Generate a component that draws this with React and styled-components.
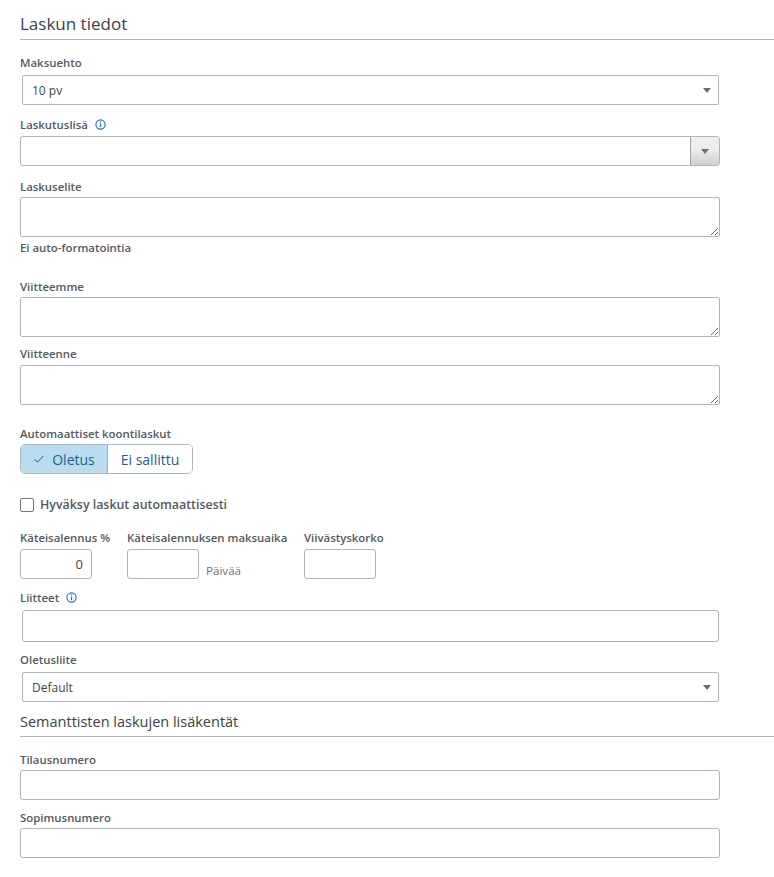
import React from "react";
import styled, { createGlobalStyle } from "styled-components";

const GlobalStyle = createGlobalStyle`
  html, body {
    margin: 0;
    padding: 0;
    background: #fff;
    font-family: "Open Sans", "Liberation Sans", sans-serif;
  }
  * { box-sizing: border-box; }
`;

const Page = styled.div`
  width: 774px;
  height: 877px;
  overflow: hidden;
  padding: 13px 0 0 20px;
`;

const Heading = styled.h2`
  margin: ${(p) => p.$top || 0}px 0 0;
  height: ${(p) => p.$height}px;
  border-bottom: 1px solid #aab4ba;
  color: #3a4247;
  font-size: ${(p) => p.$size}px;
  font-weight: 400;
  line-height: 22px;
`;

const Field = styled.div`
  width: 700px;
  margin-top: ${(p) => p.$top || 0}px;
`;

const Label = styled.label`
  display: flex;
  align-items: center;
  gap: 7px;
  height: 14px;
  margin-bottom: ${(p) => p.$gap ?? 5}px;
  color: #52595f;
  font-size: 11.4px;
  font-weight: 600;
  line-height: 14px;
  white-space: nowrap;
`;

const SelectBox = styled.div`
  display: flex;
  align-items: center;
  justify-content: space-between;
  width: 697px;
  height: 30px;
  margin-left: 2px;
  padding: 0 7px 0 9px;
  border: 1px solid #aeb7bb;
  border-radius: 2px;
  color: #3f474c;
  font-size: 12px;
`;

const Arrow = styled.span`
  width: 0;
  height: 0;
  border-left: 4px solid transparent;
  border-right: 4px solid transparent;
  border-top: 5px solid #6f6f6f;
`;

const Combo = styled.div`
  display: flex;
  height: 30px;
  border: 1px solid #aeb7bb;
  border-radius: 3px;
  overflow: hidden;
`;

const ComboInput = styled.div`
  flex: 1;
`;

const ComboButton = styled.div`
  display: flex;
  align-items: center;
  justify-content: center;
  width: 29px;
  border-left: 1px solid #9da3a6;
  background: linear-gradient(180deg, #f0f0f0 0%, #ececec 45%, #cfcfcf 100%);
`;

const TextInput = styled.div`
  width: ${(p) => p.$width || 700}px;
  height: ${(p) => p.$height || 30}px;
  margin-left: ${(p) => p.$left || 0}px;
  padding: 0 8px;
  border: 1px solid #aeb7bb;
  border-radius: 3px;
  color: #3f474c;
  font-size: 13px;
  line-height: 28px;
  text-align: right;
`;

const TextArea = styled.textarea`
  display: block;
  width: 700px;
  height: 40px;
  border: 1px solid #aeb7bb;
  border-radius: 2px;
  outline: none;
  background: #fff;
`;

const Hint = styled.div`
  height: 14px;
  margin-top: 4px;
  color: #52595f;
  font-size: 11.4px;
  font-weight: 600;
  line-height: 14px;
`;

const ButtonGroup = styled.div`
  display: flex;
  width: 173px;
  height: 30px;
  border: 1px solid #aeb7bb;
  border-radius: 5px;
  overflow: hidden;
`;

const ToggleButton = styled.div`
  display: flex;
  align-items: center;
  justify-content: center;
  gap: 7px;
  width: ${(p) => p.$width}px;
  background: ${(p) => (p.$active ? "#b9dcf0" : "#fff")};
  border-right: ${(p) => (p.$active ? "1px solid #8fb9d2" : "none")};
  color: #1d5f8c;
  font-size: 14px;
`;

const CheckRow = styled.div`
  display: flex;
  align-items: center;
  gap: 6px;
  height: 15px;
  margin-top: 23px;
  color: #52595f;
  font-size: 12.4px;
  font-weight: 600;
`;

const CheckBox = styled.span`
  width: 14px;
  height: 14px;
  border: 1px solid #6d7479;
  border-radius: 2px;
`;

const ShortRow = styled.div`
  display: flex;
  margin-top: 19px;
`;

const ShortField = styled.div`
  width: ${(p) => p.$width}px;
`;

const InputWithUnit = styled.div`
  display: flex;
  align-items: flex-end;
  gap: 7px;
`;

const Unit = styled.span`
  padding-bottom: 1px;
  color: #6a7277;
  font-size: 11.6px;
  line-height: 14px;
`;

const InfoIcon = () => (
  <svg width="11" height="11" viewBox="0 0 11 11" fill="none" style={{ marginTop: -2 }}>
    <circle cx="5.5" cy="5.5" r="4.6" stroke="#1f74ad" strokeWidth="1.1" />
    <path d="M5.5 4.6V8.2" stroke="#1f74ad" strokeWidth="1.3" />
    <path d="M5.5 2.4V3.6" stroke="#1f74ad" strokeWidth="1.3" />
  </svg>
);

const CheckIcon = () => (
  <svg width="12" height="10" viewBox="0 0 12 10" fill="none">
    <path d="M1.5 5.2L4.4 8.2L10.5 1.8" stroke="#2f4f66" strokeWidth="1" />
  </svg>
);

const App = () => (
  <Page>
    <GlobalStyle />
    <Heading $size={17} $height={27}>Laskun tiedot</Heading>

    <Field $top={16}>
      <Label>Maksuehto</Label>
      <SelectBox>10 pv<Arrow /></SelectBox>
    </Field>

    <Field $top={13}>
      <Label $gap={4}>Laskutuslisä <InfoIcon /></Label>
      <Combo>
        <ComboInput />
        <ComboButton><Arrow /></ComboButton>
      </Combo>
    </Field>

    <Field $top={14}>
      <Label $gap={3}>Laskuselite</Label>
      <TextArea />
      <Hint>Ei auto-formatointia</Hint>
    </Field>

    <Field $top={25}>
      <Label $gap={3}>Viitteemme</Label>
      <TextArea />
    </Field>

    <Field $top={10}>
      <Label $gap={4}>Viitteenne</Label>
      <TextArea />
    </Field>

    <Field $top={22}>
      <Label $gap={3}>Automaattiset koontilaskut</Label>
      <ButtonGroup>
        <ToggleButton $active $width={88}><CheckIcon />Oletus</ToggleButton>
        <ToggleButton $width={85}>Ei sallittu</ToggleButton>
      </ButtonGroup>
    </Field>

    <CheckRow><CheckBox />Hyväksy laskut automaattisesti</CheckRow>

    <ShortRow>
      <ShortField $width={107}>
        <Label $gap={4}>Käteisalennus %</Label>
        <TextInput $width={72}>0</TextInput>
      </ShortField>
      <ShortField $width={177}>
        <Label $gap={4}>Käteisalennuksen maksuaika</Label>
        <InputWithUnit>
          <TextInput $width={72} />
          <Unit>Päivää</Unit>
        </InputWithUnit>
      </ShortField>
      <ShortField $width={100}>
        <Label $gap={4}>Viivästyskorko</Label>
        <TextInput $width={72} />
      </ShortField>
    </ShortRow>

    <Field $top={12}>
      <Label $gap={5}>Liitteet <InfoIcon /></Label>
      <TextInput $width={697} $height={32} $left={2} />
    </Field>

    <Field $top={11}>
      <Label $gap={5}>Oletusliite</Label>
      <SelectBox>Default<Arrow /></SelectBox>
    </Field>

    <Heading $size={14.5} $top={9} $height={26}>Semanttisten laskujen lisäkentät</Heading>

    <Field $top={16}>
      <Label $gap={3}>Tilausnumero</Label>
      <TextInput />
    </Field>

    <Field $top={11}>
      <Label $gap={3}>Sopimusnumero</Label>
      <TextInput />
    </Field>
  </Page>
);

export default App;
